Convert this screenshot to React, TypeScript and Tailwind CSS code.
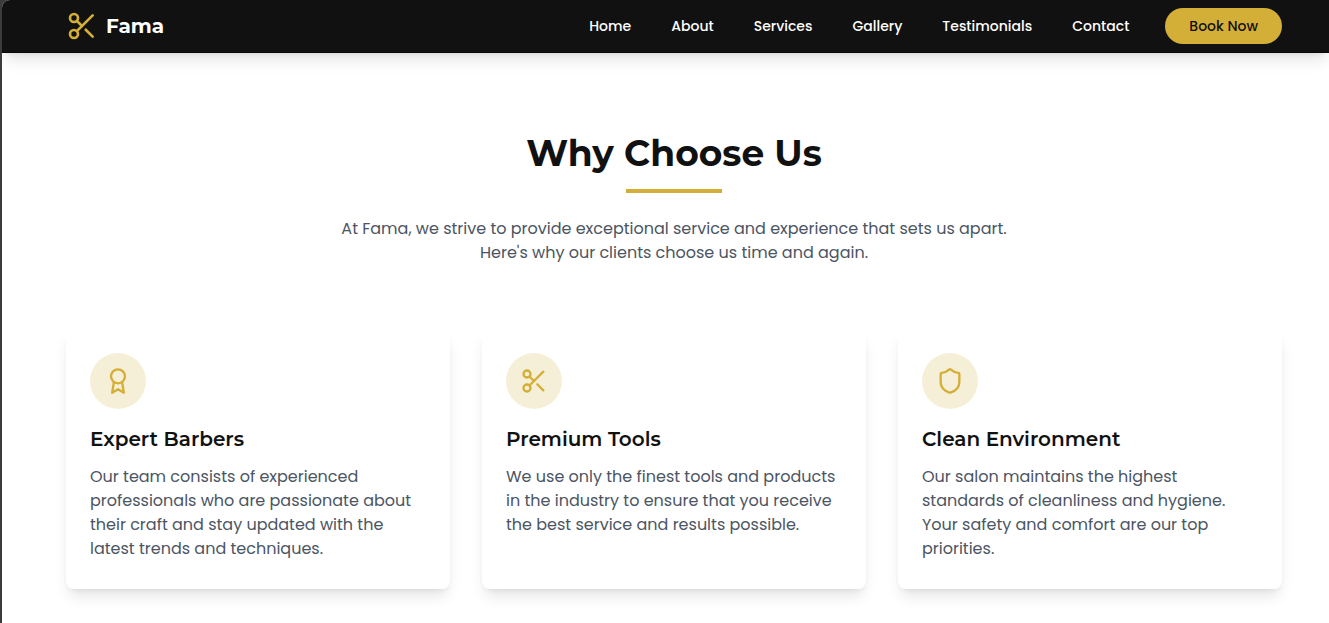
import { Scissors, Shield } from "lucide-react";
import type { ReactNode } from "react";

const links = [
  { label: "Home", id: "home" },
  { label: "About", id: "about" },
  { label: "Services", id: "services" },
  { label: "Gallery", id: "gallery" },
  { label: "Testimonials", id: "testimonials" },
  { label: "Contact", id: "contact" },
];

function Award() {
  return (
    <svg
      width="28"
      height="28"
      viewBox="0 0 24 24"
      fill="none"
      stroke="currentColor"
      strokeWidth="2"
      strokeLinecap="round"
      strokeLinejoin="round"
      aria-hidden="true"
    >
      <circle cx="12" cy="8" r="6" />
      <path d="M15.477 12.89 17 22l-5-3-5 3 1.523-9.11" />
    </svg>
  );
}

const features: { title: string; text: string; icon: ReactNode }[] = [
  {
    title: "Expert Barbers",
    text: "Our team consists of experienced professionals who are passionate about their craft and stay updated with the latest trends and techniques.",
    icon: <Award />,
  },
  {
    title: "Premium Tools",
    text: "We use only the finest tools and products in the industry to ensure that you receive the best service and results possible.",
    icon: <Scissors size={28} />,
  },
  {
    title: "Clean Environment",
    text: "Our salon maintains the highest standards of cleanliness and hygiene. Your safety and comfort are our top priorities.",
    icon: <Shield size={28} />,
  },
];

export default function App() {
  return (
    <div className="min-h-screen bg-[#3c3c3c] pl-0.5 font-['Poppins','Inter',sans-serif] text-[#111111]">
      <div className="min-h-screen overflow-hidden rounded-tl-lg bg-white">
        <header className="border-b border-[#0a0808] bg-[#111111] shadow-lg">
          <div className="flex items-center justify-between py-2 pr-[47px] pl-16">
            <a href="#home" className="flex items-center gap-2">
              <Scissors size={32} className="text-[#d4af37]" />
              <span className="font-['Montserrat','Inter',sans-serif] text-xl font-bold text-white">Fama</span>
            </a>
            <div className="flex items-center gap-9">
              <nav className="flex items-center gap-10 text-sm font-medium text-white">
                {links.map((link) => (
                  <a key={link.id} href={`#${link.id}`}>
                    {link.label}
                  </a>
                ))}
              </nav>
              <button type="button" className="h-9 rounded-full bg-[#d4af37] px-6 text-sm font-medium">
                Book Now
              </button>
            </div>
          </div>
        </header>

        <main className="pt-20 pr-[47px] pb-8 pl-16">
          <div className="flex flex-col items-center text-center">
            <h2 className="font-['Montserrat','Inter',sans-serif] text-4xl font-bold">Why Choose Us</h2>
            <div className="mt-4 h-1 w-24 bg-[#d4af37]" />
            <p className="mt-6 max-w-[680px] text-base text-[#4b5563]">
              At Fama, we strive to provide exceptional service and experience that sets us apart. Here's why our
              clients choose us time and again.
            </p>
          </div>

          <div className="mt-16 grid grid-cols-3 gap-8">
            {features.map((feature) => (
              <article key={feature.title} className="rounded-lg bg-white px-6 pt-6 pb-7 shadow-lg">
                <div className="flex size-14 items-center justify-center rounded-full bg-[#f6efd7] text-[#d4af37]">
                  {feature.icon}
                </div>
                <h3 className="mt-4 font-['Montserrat','Inter',sans-serif] text-xl font-semibold">{feature.title}</h3>
                <p className="mt-3 text-base text-[#4b5563]">{feature.text}</p>
              </article>
            ))}
          </div>
        </main>
      </div>
    </div>
  );
}
